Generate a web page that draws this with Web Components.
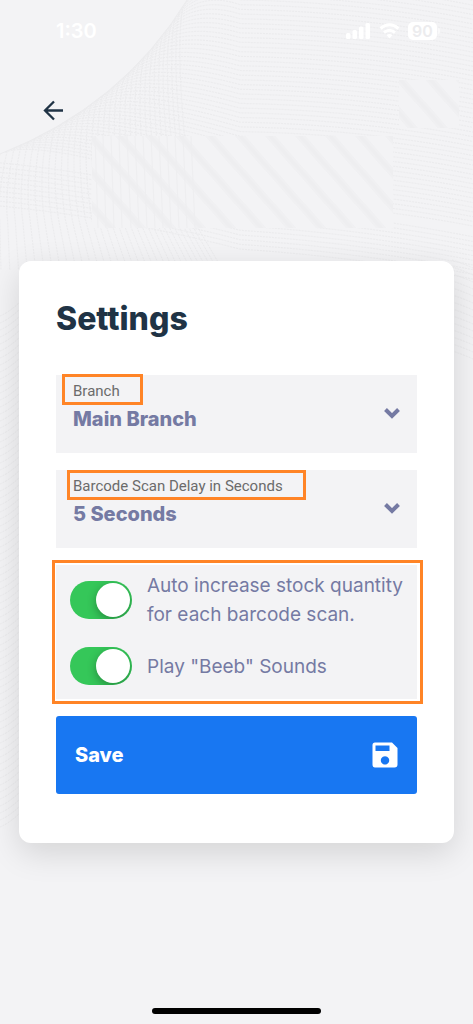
<!DOCTYPE html>
<html lang="en">
<head>
<meta charset="utf-8">
<meta name="viewport" content="width=device-width, initial-scale=1">
<title>Settings</title>
<style>
html, body { margin: 0; }
body { font-family: Inter, "Liberation Sans", sans-serif; background: #f3f3f5; color: #203345; }
</style>
</head>
<body>
<settings-page>
  <status-bar slot="status"></status-bar>
  <back-button slot="nav"></back-button>
  <settings-card heading="Settings">
    <select-field label="Branch" value="Main Branch" class="first"></select-field>
    <select-field label="Barcode Scan Delay in Seconds" value="5 Seconds"></select-field>
    <switch-group>
      <switch-row>Auto increase stock quantity<br>for each barcode scan.</switch-row>
      <switch-row>Play "Beeb" Sounds</switch-row>
    </switch-group>
    <save-button>Save</save-button>
  </settings-card>
</settings-page>

<script>
class Base extends HTMLElement {
  mount(html) { this.attachShadow({ mode: 'open' }).innerHTML = html; }
}

customElements.define('wave-backdrop', class extends Base {
  connectedCallback() {
    // Edge of the clear disc in the top left corner, t from 0 (top) to 1 (left)
    const edge = t => {
      const u = 1 - t;
      return [u * u * 187 + 2 * u * t * 122, 2 * u * t * 106 + t * t * 154];
    };
    const tangent = t => {
      const u = 1 - t, x = u * 65 + t * 122, y = -(u * 106 + t * 48), l = Math.hypot(x, y);
      return [x / l, y / l];
    };
    let d = '';
    const f = n => n.toFixed(1);
    for (let k = -8; k < 54; k++) {
      const t = Math.max(0, Math.min(1, (k + 4) / 48));
      const [x, y] = edge(t), [a, b] = tangent(t), ry = k * 4.7;
      if (k > 43) {
        const ly = 158 + (k - 43) * 4.8;
        d += `M0 ${f(ly)}Q120 ${f(ly + 12)} 240 ${f(ry)}Q360 ${f(ry + 8)} 473 ${f(ry + 30)}`;
      } else {
        d += `M${f(x)} ${f(y)}Q${f(x + a * 45)} ${f(y + b * 38)} 240 ${f(ry)}Q360 ${f(ry + 2)} 473 ${f(ry + 24)}`;
      }
    }
    for (let k = 0; k < 34; k++) {
      const [x, y] = edge(1 - k / 34), bx = x * 1.1 - 8;
      d += `M${f(x)} ${f(y)}Q${f(x - 10)} ${f(y + 45)} ${f(bx)} 220L${f(bx + x * 0.16)} 270`;
    }
    for (let k = 0; k < 74; k++) {
      const y = 300 + k * 7;
      d += `M0 ${y + 16}Q10 ${y + 12} 22 ${y}`;
      if (k < 14) d += `M452 ${y - 40}Q462 ${y - 37} 473 ${y - 32}`;
    }
    this.mount(`<style>
      :host { display: block; position: absolute; inset: 0; overflow: hidden; pointer-events: none; }
      svg { display: block; }
    </style>
    <svg width="473" height="840" viewBox="0 0 473 840" fill="none" aria-hidden="true">
      <defs>
        <pattern id="s" width="30" height="34" patternUnits="userSpaceOnUse">
          <g stroke="#f0f0f2" stroke-width="8"><path d="M-5-6L35 40M-35-6L5 40M25-6L65 40"/></g>
          <g stroke="#eeeef0" stroke-width="3"><path d="M-5-6L35 40M-35-6L5 40M25-6L65 40"/></g>
        </pattern>
      </defs>
      <path d="${d}" stroke="#ebebed" stroke-width="1" stroke-dasharray="2 1"/>
      <path d="M187 0Q122 106 0 154" stroke="#ebebed"/>
      <path d="M92 136H393V228H92ZM399 80H459V128H399Z" fill="#f3f3f5"/>
      <path d="M92 136H393V228H92ZM399 80H459V128H399Z" fill="url(#s)"/>
      <path d="M95 136l3 92m5-92l3 92m5-92l3 92m5-92l3 92m5-92l4 92m4-92l4 92m4-92l4 92m4-92l4 92m4-92l4 92m4-92l4 92m4-92l4 92m4-92l4 92m4-92l4 92" stroke="#eeeef0"/>
    </svg>`);
  }
});

customElements.define('settings-page', class extends Base {
  connectedCallback() {
    this.mount(`<style>
      :host { display: block; position: relative; }
      .page { position: relative; display: flex; flex-direction: column; min-height: 100vh; box-sizing: border-box; padding: 0 19px 10px; }
      nav { padding: 36px 0 0 21px; height: 163px; }
      .home { width: 169px; height: 6px; border-radius: 3px; background: #000; margin: auto auto 0; }
    </style>
    <wave-backdrop></wave-backdrop>
    <div class="page">
      <slot name="status"></slot>
      <nav><slot name="nav"></slot></nav>
      <main><slot></slot></main>
      <div class="home"></div>
    </div>`);
  }
});

customElements.define('status-bar', class extends Base {
  connectedCallback() {
    this.mount(`<style>
      :host { display: flex; justify-content: space-between; align-items: center; height: 62px; padding: 0 14px 0 37px; color: #fff; }
      time { font-size: 20px; font-weight: 600; line-height: 24px; }
      .icons { display: flex; align-items: center; gap: 8px; }
      .battery { display: flex; align-items: center; gap: 1px; }
      .level { width: 29px; height: 18px; border-radius: 5px; background: #fff; color: #ececee; font-size: 16px; font-weight: 600; line-height: 18px; text-align: center; }
      .cap { width: 2px; height: 6px; border-radius: 0 2px 2px 0; background: #f9f9fa; }
      svg { display: block; }
    </style>
    <time>1:30</time>
    <div class="icons">
      <svg width="25" height="16" viewBox="0 0 25 16" fill="#fff"><rect y="10" width="4.500" height="6" rx="1.500"/><rect x="6.500" y="7" width="4.500" height="9" rx="1.500"/><rect x="13" y="3.500" width="4.500" height="12.500" rx="1.500"/><rect x="19.500" width="4.500" height="16" rx="1.500"/></svg>
      <svg width="21" height="16" viewBox="0 0 21 16" fill="none" stroke="#fff" stroke-width="3"><path d="M1.500 5.500Q10.500-2 19.500 5.500M5 9.500Q10.500 5 16 9.500"/><path d="M7.500 12q3-2 6 0l-3 3.500z" fill="#fff" stroke="none"/></svg>
      <div class="battery"><div class="level">90</div><div class="cap"></div></div>
    </div>`);
  }
});

customElements.define('back-button', class extends Base {
  connectedCallback() {
    this.mount(`<style>
      :host { display: inline-block; }
      button { display: block; border: 0; padding: 0; background: none; color: #203345; cursor: pointer; }
      svg { display: block; }
    </style>
    <button type="button" aria-label="Back">
      <svg width="26" height="26" viewBox="0 0 26 26" fill="none" stroke="currentColor" stroke-width="2.300"><path d="M23 12.500H5M14 3.500L5 12.500L14 21.500"/></svg>
    </button>`);
  }
});

customElements.define('settings-card', class extends Base {
  connectedCallback() {
    this.mount(`<style>
      :host { display: block; background: #fff; border-radius: 12px; padding: 37px 37px 49px; box-shadow: 0 10px 32px rgba(0,0,0,.13); }
      h1 { margin: 0 0 35px; font-size: 32px; line-height: 42px; font-weight: 800; color: #203345; }
      .stack { display: grid; gap: 17px; }
    </style>
    <h1>${this.getAttribute('heading')}</h1>
    <div class="stack"><slot></slot></div>`);
  }
});

customElements.define('select-field', class extends Base {
  connectedCallback() {
    this.mount(`<style>
      :host { display: block; }
      .field { position: relative; height: 78px; background: #f3f3f5; }
      label { position: absolute; left: 11px; top: 0; box-sizing: border-box; height: 30px; padding: 0 20px 0 3px; border: 3px solid #ff8426; font: 15px/27px Roboto, sans-serif; color: #6b6b6b; }
      :host(.first) label { left: 6px; top: -1px; height: 31px; padding: 0 20px 0 8px; line-height: 29px; }
      select { appearance: none; display: block; width: 100%; height: 100%; border: 0; margin: 0; padding: 22px 48px 12px 17px; background: none; font-family: inherit; font-size: 20px; font-weight: 800; line-height: 28px; color: #757aa3; }
      svg { position: absolute; right: 17px; top: 33px; pointer-events: none; }
    </style>
    <div class="field">
      <select id="f"><option>${this.getAttribute('value')}</option></select>
      <label for="f">${this.getAttribute('label')}</label>
      <svg width="16" height="12" viewBox="0 0 16 12" fill="none" stroke="#757aa3" stroke-width="4"><path d="M1.500 1.500L8 8L14.500 1.500"/></svg>
    </div>`);
  }
});

customElements.define('switch-group', class extends Base {
  connectedCallback() {
    this.mount(`<style>
      :host { display: grid; gap: 18px; position: relative; padding: 5px 14px 14px; background: #f3f3f5; }
      :host::after { content: ""; position: absolute; inset: -5px -6px -5px -4px; border: 3px solid #ff8426; pointer-events: none; }
    </style><slot></slot>`);
  }
});

customElements.define('switch-row', class extends Base {
  connectedCallback() {
    this.mount(`<style>
      :host { display: block; }
      label { display: flex; align-items: center; gap: 15px; color: #757aa3; font-size: 19px; line-height: 29px; white-space: nowrap; }
      input { appearance: none; flex: none; position: relative; width: 62px; height: 38px; margin: 0; border-radius: 19px; overflow: hidden; background: #ccc; }
      input:checked { background: #35c759; }
      input::after { content: ""; position: absolute; top: 2px; left: 2px; width: 34px; height: 34px; border-radius: 50%; background: #fff; box-shadow: 0 3px 10px rgba(0,0,0,.3); }
      input:checked::after { left: 26px; }
      span { padding-top: 1px; }
    </style>
    <label><input type="checkbox" role="switch" checked><span><slot></slot></span></label>`);
  }
});

customElements.define('save-button', class extends Base {
  connectedCallback() {
    this.mount(`<style>
      :host { display: block; }
      button { display: flex; align-items: center; justify-content: space-between; box-sizing: border-box; width: 100%; height: 78px; border: 0; border-radius: 3px; padding: 0 19px; background: #1877f2; color: #fff; font-family: inherit; font-size: 20px; font-weight: 800; line-height: 28px; cursor: pointer; }
    </style>
    <button type="button"><slot></slot>
      <svg width="26" height="26" viewBox="0 0 26 26" fill="#fff" fill-rule="evenodd" aria-hidden="true"><path d="M3 .5H20L25.500 6V22.500Q25.500 25.500 22.500 25.500H3Q.5 25.500 .5 22.500V3Q.5 .5 3 .5ZM3.500 3.500V9H17.500V3.500ZM13 14.200a4.200 4.200 0 1 0 .01 0Z"/></svg>
    </button>`);
  }
});
</script>
</body>
</html>
